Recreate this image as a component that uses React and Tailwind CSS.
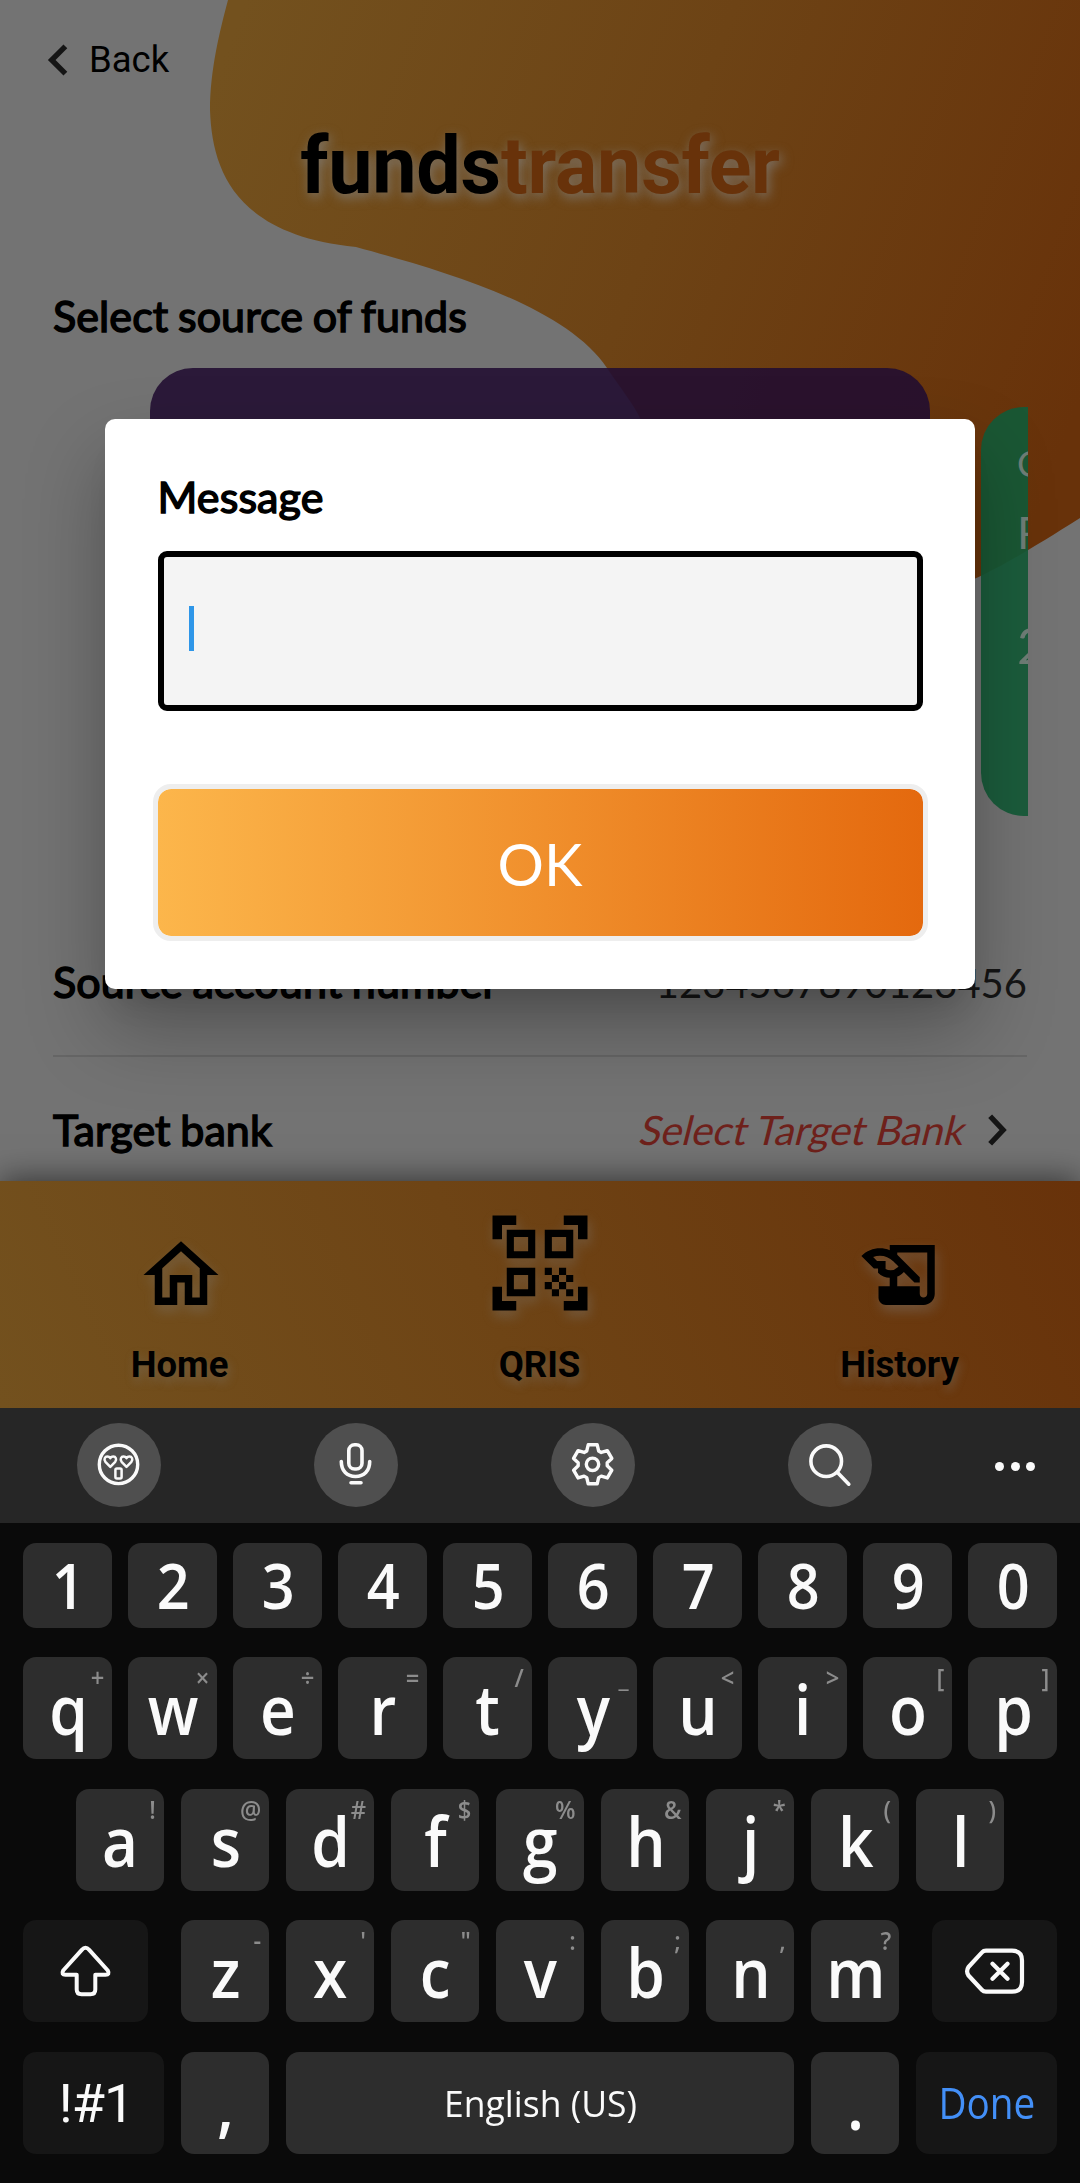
import { MdHistoryEdu, MdOutlineHome, MdQrCodeScanner } from "react-icons/md";

const titleShadow = "[text-shadow:2px_4px_12px_rgba(130,130,130,0.75)]";
const labelShadow = "[text-shadow:2px_5px_10px_rgba(125,125,125,0.4)]";
const iconShadow = "drop-shadow-[2px_6px_6px_rgba(125,125,125,0.4)]";
const latoHeading =
  "font-['Lato',sans-serif] text-[43px] leading-[52px] tracking-[0.1px] text-black [word-spacing:-1.5px] [-webkit-text-stroke:1.5px_#000]";

function Key({ label, hint, digit, className = "" }) {
  return (
    <div className={"relative flex h-full items-center justify-center rounded-[13px] bg-[#2d2d2d] " + className}>
      <span
        className={
          "ml-px inline-block scale-x-[0.9] font-['Open_Sans','Noto_Sans',sans-serif] font-semibold leading-none text-[#fafafa] " +
          (digit ? "pb-px text-[64px]" : "text-[69px]")
        }
      >
        {label}
      </span>
      {hint && (
        <span className="absolute right-[8px] top-[6px] inline-block origin-right scale-x-[0.95] font-['Open_Sans','Noto_Sans',sans-serif] text-[25px] font-semibold leading-[28px] text-[#8c8c8c]">
          {hint}
        </span>
      )}
    </div>
  );
}

const rowTwo = [["q", "+"], ["w", "×"], ["e", "÷"], ["r", "="], ["t", "/"], ["y", "_"], ["u", "<"], ["i", ">"], ["o", "["], ["p", "]"]];
const rowThree = [["a", "!"], ["s", "@"], ["d", "#"], ["f", "$"], ["g", "%"], ["h", "&"], ["j", "*"], ["k", "("], ["l", ")"]];
const rowFour = [["z", "-"], ["x", "'"], ["c", "\""], ["v", ":"], ["b", ";"], ["n", ","], ["m", "?"]];

// Outline of the six-toothed settings gear, centred on (41.7, 41.3).
const gearPoints = [0, 60, 120, 180, 240, 300]
  .flatMap((tooth) => [[14.6, -24], [20, -13], [20, 13], [14.6, 24]].map(([r, a]) => {
    const t = ((tooth + a) * Math.PI) / 180;
    return (41.7 + r * Math.sin(t)).toFixed(2) + "," + (41.3 - r * Math.cos(t)).toFixed(2);
  }))
  .join(" ");

const heart = "M33.3 43.8L28.4 38.8C26.4 36 28 33.6 30.3 33.6C31.8 33.6 32.8 34.4 33.3 35.2C33.8 34.4 34.8 33.6 36.3 33.6C38.6 33.6 40.2 36 38.2 38.8Z";

function ToolButton({ children }) {
  return (
    <div className="size-[84px] rounded-full bg-[#4f4f4f]">
      <svg viewBox="0 0 84 84" className="size-full fill-none stroke-[#fafafa] stroke-[3.6] [stroke-linecap:round] [stroke-linejoin:round]">
        {children}
      </svg>
    </div>
  );
}

export default function App() {
  return (
    <div className="relative flex h-[2183px] w-[1080px] flex-col overflow-hidden bg-[#737373] font-['Roboto',sans-serif]">
      <div className="relative h-[1181px] overflow-hidden">
        <svg className="absolute left-0 top-0" width="1080" height="600" viewBox="0 0 1080 600">
          <defs>
            <linearGradient id="blob" gradientUnits="userSpaceOnUse" x1="215" y1="80" x2="1080" y2="400">
              <stop offset="0" stopColor="#73511e" />
              <stop offset="0.5" stopColor="#6d4315" />
              <stop offset="1" stopColor="#68320a" />
            </linearGradient>
          </defs>
          <path d="M228 0C220 30 210 70 210 110C212 170 235 235 356 247C440 270 565 305 607 368C622 390 634 405 640 418C670 520 780 620 900 600C960 590 985 578 1080 518V0Z" fill="url(#blob)" />
        </svg>
        <div className="relative flex items-center pl-[45px] pt-[37px]">
          <svg viewBox="0 0 24 42" className="h-[32px] w-[24px] fill-none stroke-[#151515] stroke-[7]"><path d="M23 3L5 21L23 39" /></svg>
          <span className="ml-[20px] pt-px text-[36.5px] leading-[44px]">Back</span>
        </div>
        <h1 className={"relative mt-[37px] text-center text-[79px] font-bold leading-[94px] tracking-[-0.2px] " + titleShadow}>
          funds<span className="text-[#68320a]">transfer</span>
        </h1>
        <h2 className={"relative ml-[53px] mt-[77px] " + latoHeading}>Select source of funds</h2>
        <div className="relative mt-[26px] ml-[52px] flex h-[500px] w-[976px] items-start overflow-hidden">
          <div className="ml-[98px] h-[480px] w-[780px] shrink-0 rounded-[43px] bg-[#220d31]/89" />
          <div className="ml-[51px] mt-[39px] h-[409px] w-[600px] shrink-0 rounded-[43px] bg-[#145a38]/93 pl-[36px] pt-[34px] font-['Lato',sans-serif] text-[#6f7d76]">
            <p className="text-[36px] leading-[44px]">Cash</p>
            <p className="mt-[21px] text-[44px] leading-[52px]">Rp</p>
            <p className="mt-[57px] text-[51px] leading-[60px]">250</p>
          </div>
        </div>
        <div className="mx-[53px] mt-[88px] flex items-baseline justify-between">
          <span className={latoHeading}>Source account number</span>
          <span className="font-['Lato',sans-serif] text-[40px] leading-[52px] text-[#151515]">1234567890123456</span>
        </div>
        <div className="mx-[53px] mt-[46px] h-[2px] bg-[#666]" />
        <div className="ml-[53px] mr-[71px] mt-[46px] flex items-center">
          <span className={latoHeading}>Target bank</span>
          <span className="ml-auto inline-block -skew-x-[14deg] pt-px font-['Lato',sans-serif] text-[40.5px] leading-[52px] tracking-[-0.1px] text-[#6e211b]">Select Target Bank</span>
          <svg viewBox="0 0 24 42" className="ml-[19px] h-[32px] w-[24px] fill-none stroke-[#151515] stroke-[7]"><path d="M3 3L20 21L3 39" /></svg>
        </div>
      </div>

      <nav className="relative grid h-[227px] shrink-0 grid-cols-3 bg-[linear-gradient(66deg,#73511e_0%,#6e4415_45%,#68320a_100%)] text-[36.5px] font-bold leading-[42px] text-black shadow-[0_-2px_30px_rgba(0,0,0,0.55)]">
        <div className="flex flex-col items-center justify-end pb-[22px]"><MdOutlineHome className={"mb-[24px] ml-[2px] size-[90px] " + iconShadow} /><span className={"-ml-px " + labelShadow}>Home</span></div>
        <div className="flex flex-col items-center justify-end pb-[22px]"><MdQrCodeScanner className={"mb-[24px] size-[114px] " + iconShadow} /><span className={"-ml-px " + labelShadow}>QRIS</span></div>
        <div className="flex flex-col items-center justify-end pb-[22px]"><MdHistoryEdu className={"mb-[24px] ml-px size-[90px] " + iconShadow} /><span className={"-ml-px " + labelShadow}>History</span></div>
      </nav>

      <div className="relative flex h-[115px] shrink-0 items-center bg-[#262626] pb-px pl-[77px]">
        <div className="flex gap-[153px]">
          <ToolButton>
            <circle cx="41.5" cy="41.4" r="19.2" strokeWidth="3.4" />
            <g strokeWidth="2.5">
              <path d={heart} />
              <path d={heart} transform="translate(16.2 0)" />
              <rect x="38.4" y="45.6" width="6.2" height="10" rx="1.5" />
            </g>
          </ToolButton>
          <ToolButton>
            <rect x="34.8" y="21.8" width="13.2" height="24.2" rx="5.8" />
            <path d="M27.3 38.5C27.3 48 33 53.5 41.5 53.5S55.7 48 55.7 38.5M37 59.7H47" />
          </ToolButton>
          <ToolButton>
            <polygon points={gearPoints} strokeWidth="3.4" />
            <circle cx="41.5" cy="41.3" r="6.2" strokeWidth="3.4" />
          </ToolButton>
          <ToolButton>
            <circle cx="38.2" cy="38.2" r="15.3" />
            <path d="M50 50L60.8 61.2" />
          </ToolButton>
        </div>
        <div className="ml-[123px] mt-[2px] flex gap-[6.5px]">
          <i className="size-[9px] rounded-full bg-[#fafafa]" />
          <i className="size-[9px] rounded-full bg-[#fafafa]" />
          <i className="size-[9px] rounded-full bg-[#fafafa]" />
        </div>
      </div>

      <div className="flex flex-1 flex-col bg-[#0a0a0a] px-[23px] pt-[20px]">
        <div className="flex h-[85px] gap-[16px]">{"1234567890".split("").map((n) => <Key key={n} label={n} digit className="w-[89px]" />)}</div>
        <div className="mt-[29px] flex h-[102px] gap-[16px]">{rowTwo.map(([l, h]) => <Key key={l} label={l} hint={h} className="w-[89px]" />)}</div>
        <div className="mt-[30px] flex h-[102px] gap-[17px] pl-[53px]">{rowThree.map(([l, h]) => <Key key={l} label={l} hint={h} className="w-[88px]" />)}</div>
        <div className="mt-[29px] flex h-[102px] justify-between">
          <div className="w-[125px] rounded-[13px] bg-[#161616]">
            <svg viewBox="0 0 125 102" className="size-full fill-none stroke-[#fafafa] stroke-4 [stroke-linejoin:round]">
              <path d="M58.8 29.8Q62.5 25.8 66.2 29.8L84.8 50.5Q87 54.8 82.5 54.8H72.3V69.5Q72.3 74.3 67.5 74.3H58.5Q53.7 74.3 53.7 69.5V54.8H42.5Q38 54.8 40.2 50.5Z" />
            </svg>
          </div>
          <div className="flex gap-[17px]">{rowFour.map(([l, h]) => <Key key={l} label={l} hint={h} className="w-[88px]" />)}</div>
          <div className="w-[125px] rounded-[13px] bg-[#161616]">
            <svg viewBox="0 0 125 102" className="size-full fill-none stroke-[#fafafa] stroke-[4.2] [stroke-linecap:round] [stroke-linejoin:round]">
              <path d="M54 30.7H80Q90 30.7 90 40.5V62Q90 71.7 80 71.7H54Q51.5 71.7 50 70L36.5 55.5Q33.7 51.2 36.5 47L50 32.4Q51.5 30.7 54 30.7ZM60.5 43.8L75.5 58.8M75.5 43.8L60.5 58.8" />
            </svg>
          </div>
        </div>
        <div className="mt-[30px] flex h-[102px] gap-[17px]">
          <div className="flex w-[141px] items-center justify-center rounded-[13px] bg-[#161616] pl-[5px] text-[54px] tracking-[-1px] text-[#fafafa]">!#1</div>
          <Key label="," className="w-[88px]" />
          <div className="flex w-[508px] items-center justify-center rounded-[13px] bg-[#2d2d2d] font-['Open_Sans',sans-serif] text-[37px] font-medium text-[#fafafa]"><span className="ml-[2px] inline-block scale-x-[0.96]">English (US)</span></div>
          <Key label="." className="w-[88px]" />
          <div className="flex w-[141px] items-center justify-center rounded-[13px] bg-[#161616] font-['Open_Sans',sans-serif] text-[43px] font-medium text-[#438ff7]"><span className="inline-block scale-x-[0.9]">Done</span></div>
        </div>
      </div>

      <div className="absolute left-[105px] top-[419px] h-[570px] w-[870px] rounded-[10px] bg-white px-[52.5px] pt-[52px] shadow-[0_25px_30px_-15px_rgba(0,0,0,0.12),0_40px_80px_rgba(0,0,0,0.28)]">
        <h2 className={latoHeading}>Message</h2>
        <div className="mt-[28px] h-[160px] rounded-[9px] border-[6px] border-black bg-[#f4f4f4] pl-[25px] pt-[49px]"><div className="h-[45px] w-[5px] bg-[#2e96e8]" /></div>
        <button className="mt-[78px] flex h-[147px] w-full items-center justify-center rounded-[13px] bg-[linear-gradient(90deg,#fcb64b,#e4690e)] pt-[2px] font-['Lato',sans-serif] text-[58px] text-white outline-[5px] outline-[#eee]">OK</button>
      </div>
    </div>
  );
}
